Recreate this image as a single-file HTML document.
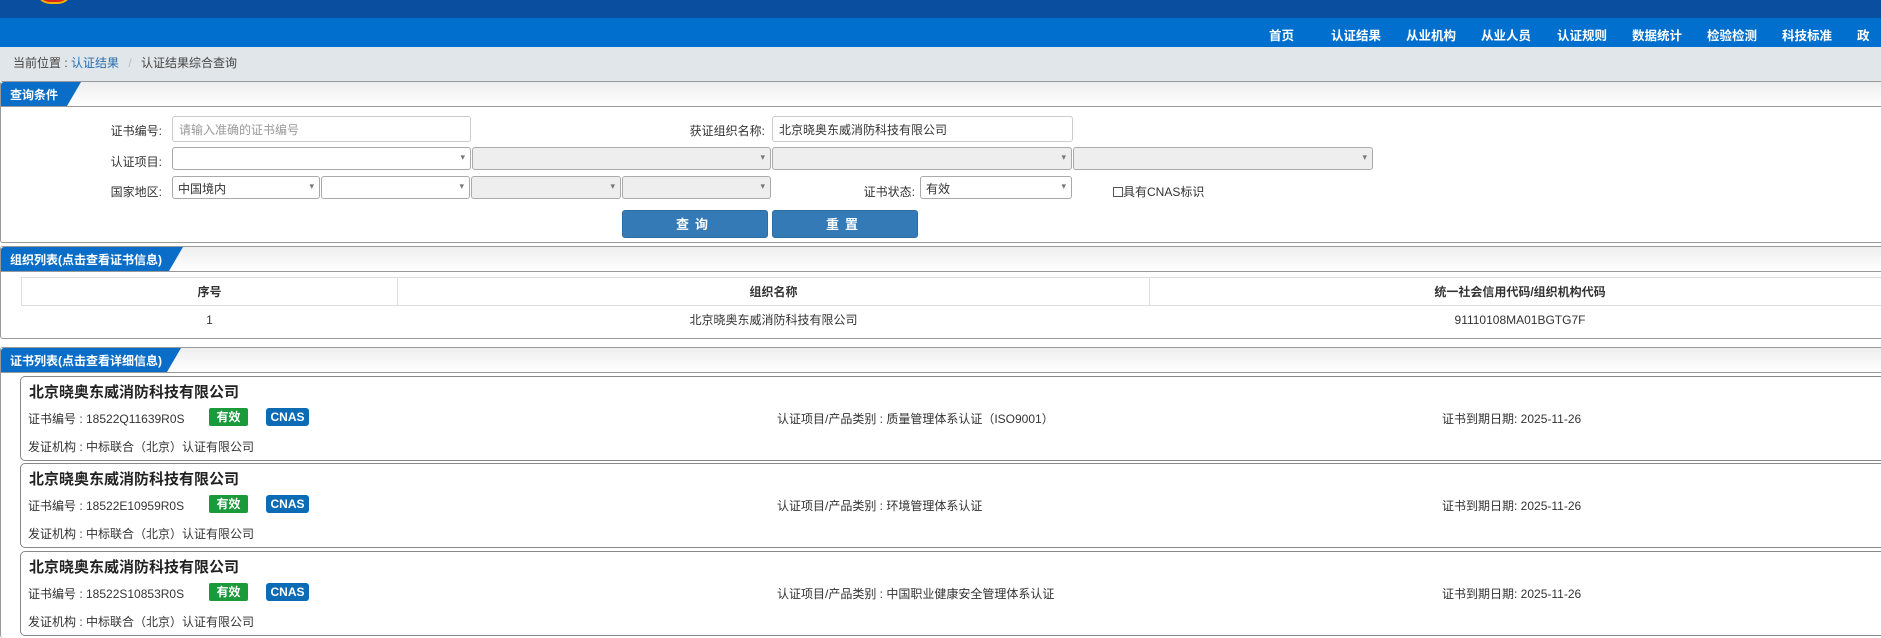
<!DOCTYPE html>
<html><head><meta charset="utf-8">
<style>
*{margin:0;padding:0;box-sizing:border-box}
body{width:1881px;height:638px;overflow:hidden;background:#fff;font-family:"Liberation Sans","Noto Sans CJK SC",sans-serif;font-size:12px;color:#333;position:relative}
.abs{position:absolute}
.top{left:0;top:0;width:1881px;height:18px;background:#0a4f9f}
.emb{left:36px;top:-10px;width:36px;height:14px;border-radius:0 0 18px 18px;background:#d9261c;border:2px solid #f1b300}
.nav{left:0;top:18px;width:1881px;height:29px;background:#006fcd}
.nav span{position:absolute;top:7px;color:#fff;font-size:12.5px;font-weight:bold}
.crumb{left:0;top:47px;width:1881px;height:34px;background:#e1e6ea}
.crumb div{position:absolute;left:13px;top:7px;font-size:12px;color:#444}
.panel{left:0;width:1881px;border:1px solid #999;border-right:none;border-radius:3px 0 0 3px;background:#fff}
.ph{height:25px;background:linear-gradient(#eee,#fff);border-bottom:1px solid #999;position:relative}
.tag{position:absolute;left:0;top:0;height:24px;background:#0a6ec8;color:#fff;font-size:12px;font-weight:bold;padding:4px 0 0 9px;clip-path:polygon(0 0,100% 0,calc(100% - 14px) 100%,0 100%);border-radius:3px 0 0 0}
.lbl{font-size:12px;color:#333;text-align:right}
.inp{border:1px solid #ccc;border-radius:3px;background:#fff;font-size:12px;padding:4px 6px;color:#333}
.sel{border:1px solid #aaa;border-radius:3px;background:#fff;height:23px;font-size:12px;padding:3px 5px}
.sel.g{background:#eee}
.sel:after{content:"▾";position:absolute;right:5px;top:4px;font-size:9px;color:#777}
.btn{background:#337ab7;border:1px solid #2e6da4;border-radius:3px;color:#fff;font-size:13px;font-weight:bold;text-align:center;line-height:27px;letter-spacing:6px}
table{border-collapse:collapse;position:absolute;left:20px;top:30px;width:1870px}
td,th{border:1px solid #ddd;border-left:none;height:28px;text-align:center;font-size:12px}
th{font-weight:bold}
.card{left:20px;width:1870px;height:85px;border:1px solid #888;border-right:none;border-radius:5px 0 0 5px;background:#fff}
.card .t{position:absolute;left:8px;top:4px;font-size:15px;font-weight:bold;color:#222}
.card .r{position:absolute;top:33px;font-size:12px;color:#333}
.card .i{position:absolute;left:7px;top:61px;font-size:12px;color:#333}
.b{position:absolute;top:31px;height:18px;color:#fff;font-weight:bold;font-size:12px;text-align:center;line-height:18px;border-radius:2px}
</style></head><body>
<div class="abs top"></div>
<div class="abs emb"></div>
<div class="abs nav">
<span style="left:1269px">首页</span><span style="left:1331px">认证结果</span><span style="left:1406px">从业机构</span><span style="left:1481px">从业人员</span><span style="left:1557px">认证规则</span><span style="left:1632px">数据统计</span><span style="left:1707px">检验检测</span><span style="left:1782px">科技标准</span><span style="left:1857px">政采</span>
</div>
<div class="abs crumb"><div>当前位置 : <span style="color:#2a6fb0">认证结果</span> <span style="color:#bbb;margin:0 6px">/</span> 认证结果综合查询</div></div>

<div class="abs panel" style="top:81px;height:162px">
<div class="ph"><div class="tag" style="width:80px">查询条件</div></div>
</div>
<div class="abs lbl" style="left:80px;width:82px;top:122px">证书编号:</div>
<div class="abs inp" style="left:172px;top:116px;width:299px;height:26px;color:#999">请输入准确的证书编号</div>
<div class="abs lbl" style="left:640px;width:125px;top:122px">获证组织名称:</div>
<div class="abs inp" style="left:772px;top:116px;width:301px;height:26px">北京晓奥东威消防科技有限公司</div>
<div class="abs lbl" style="left:80px;width:82px;top:153px">认证项目:</div>
<div class="abs sel" style="left:172px;top:147px;width:299px"></div>
<div class="abs sel g" style="left:472px;top:147px;width:299px"></div>
<div class="abs sel g" style="left:772px;top:147px;width:300px"></div>
<div class="abs sel g" style="left:1073px;top:147px;width:300px"></div>
<div class="abs lbl" style="left:80px;width:82px;top:183px">国家地区:</div>
<div class="abs sel" style="left:172px;top:176px;width:148px">中国境内</div>
<div class="abs sel" style="left:321px;top:176px;width:149px"></div>
<div class="abs sel g" style="left:471px;top:176px;width:150px"></div>
<div class="abs sel g" style="left:622px;top:176px;width:149px"></div>
<div class="abs lbl" style="left:840px;width:75px;top:183px">证书状态:</div>
<div class="abs sel" style="left:920px;top:176px;width:152px">有效</div>
<div class="abs" style="left:1113px;top:183px;font-size:12px"><span style="display:inline-block;width:10px;height:10px;border:1px solid #555;vertical-align:-1px"></span>具有CNAS标识</div>
<div class="abs btn" style="left:622px;top:210px;width:146px;height:28px">查询</div>
<div class="abs btn" style="left:772px;top:210px;width:146px;height:28px">重置</div>

<div class="abs panel" style="top:246px;height:93px">
<div class="ph"><div class="tag" style="width:182px">组织列表(点击查看证书信息)</div></div>
<table><tr><th style="width:376px;border-left:1px solid #ddd">序号</th><th style="width:752px">组织名称</th><th>统一社会信用代码/组织机构代码</th></tr>
<tr><td style="border:none">1</td><td style="border:none">北京晓奥东威消防科技有限公司</td><td style="border:none">91110108MA01BGTG7F</td></tr></table>
</div>

<div class="abs panel" style="top:347px;height:291px;border-bottom:none">
<div class="ph"><div class="tag" style="width:180px">证书列表(点击查看详细信息)</div></div>
</div>

<div class="abs card" style="top:376px">
<div class="t">北京晓奥东威消防科技有限公司</div>
<div class="r" style="left:7px">证书编号 : 18522Q11639R0S</div>
<div class="b" style="left:188px;width:39px;background:#1a9a3a">有效</div>
<div class="b" style="left:245px;width:43px;background:#0b6bb5;border-radius:3px">CNAS</div>
<div class="r" style="left:756px">认证项目/产品类别 : 质量管理体系认证（ISO9001）</div>
<div class="r" style="left:1421px">证书到期日期: 2025-11-26</div>
<div class="i">发证机构 : 中标联合（北京）认证有限公司</div>
</div>
<div class="abs card" style="top:463px">
<div class="t">北京晓奥东威消防科技有限公司</div>
<div class="r" style="left:7px">证书编号 : 18522E10959R0S</div>
<div class="b" style="left:188px;width:39px;background:#1a9a3a">有效</div>
<div class="b" style="left:245px;width:43px;background:#0b6bb5;border-radius:3px">CNAS</div>
<div class="r" style="left:756px">认证项目/产品类别 : 环境管理体系认证</div>
<div class="r" style="left:1421px">证书到期日期: 2025-11-26</div>
<div class="i">发证机构 : 中标联合（北京）认证有限公司</div>
</div>
<div class="abs card" style="top:551px">
<div class="t">北京晓奥东威消防科技有限公司</div>
<div class="r" style="left:7px">证书编号 : 18522S10853R0S</div>
<div class="b" style="left:188px;width:39px;background:#1a9a3a">有效</div>
<div class="b" style="left:245px;width:43px;background:#0b6bb5;border-radius:3px">CNAS</div>
<div class="r" style="left:756px">认证项目/产品类别 : 中国职业健康安全管理体系认证</div>
<div class="r" style="left:1421px">证书到期日期: 2025-11-26</div>
<div class="i">发证机构 : 中标联合（北京）认证有限公司</div>
</div>
</body></html>
